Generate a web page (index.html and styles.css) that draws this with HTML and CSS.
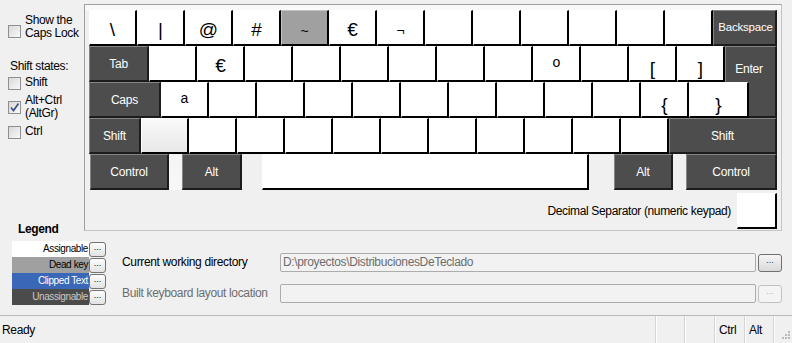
FILE: index.html
```html
<!DOCTYPE html>
<html>
<head>
<meta charset="utf-8">
<link rel="stylesheet" href="styles.css">
</head>
<body>
<div class="app">
  <div class="top">
    <div class="sidebar">
      <div class="chk caps"><span class="box"></span><span class="lbl">Show the<br>Caps Lock</span></div>
      <div class="shift-title">Shift states:</div>
      <div class="chk c-shift"><span class="box"></span><span class="lbl">Shift</span></div>
      <div class="chk c-alt"><span class="box"><svg width="11" height="11" viewBox="0 0 11 11"><path d="M2 5.5 L4.5 8.5 L9.5 1.5" fill="none" stroke="#3d4f86" stroke-width="1.7"/></svg></span><span class="lbl">Alt+Ctrl<br>(AltGr)</span></div>
      <div class="chk c-ctrl"><span class="box"></span><span class="lbl">Ctrl</span></div>
      <div class="legend-title">Legend</div>
    </div>
    <div class="panel">
      <div class="kbd">
        <div class="row">
          <div class="key ch">\</div>
          <div class="key ch">|</div>
          <div class="key ch">@</div>
          <div class="key ch">#</div>
          <div class="key dead ch sm">~</div>
          <div class="key ch">€</div>
          <div class="key ch sm">¬</div>
          <div class="key"></div>
          <div class="key"></div>
          <div class="key"></div>
          <div class="key"></div>
          <div class="key"></div>
          <div class="key"></div>
          <div class="key fn w-bksp">Backspace</div>
        </div>
        <div class="row">
          <div class="key fn w-tab">Tab</div>
          <div class="key"></div>
          <div class="key ch">€</div>
          <div class="key"></div>
          <div class="key"></div>
          <div class="key"></div>
          <div class="key"></div>
          <div class="key"></div>
          <div class="key"></div>
          <div class="key lt">o</div>
          <div class="key"></div>
          <div class="key ch low">[</div>
          <div class="key ch low">]</div>
          <div class="key fn enter">Enter</div>
        </div>
        <div class="row">
          <div class="key fn w-caps">Caps</div>
          <div class="key lt">a</div>
          <div class="key"></div>
          <div class="key"></div>
          <div class="key"></div>
          <div class="key"></div>
          <div class="key"></div>
          <div class="key"></div>
          <div class="key"></div>
          <div class="key"></div>
          <div class="key"></div>
          <div class="key ch low">{</div>
          <div class="key ch low w-brace">}</div>
          <div class="key fn enter-tail"></div>
        </div>
        <div class="row">
          <div class="key fn w-lshift">Shift</div>
          <div class="key ghost"></div>
          <div class="key"></div>
          <div class="key"></div>
          <div class="key"></div>
          <div class="key"></div>
          <div class="key"></div>
          <div class="key"></div>
          <div class="key"></div>
          <div class="key"></div>
          <div class="key"></div>
          <div class="key"></div>
          <div class="key fn w-rshift">Shift</div>
        </div>
        <div class="row row-bottom">
          <div class="key fn w-lctrl">Control</div>
          <div class="gap g13 faint"></div>
          <div class="key fn w-lalt">Alt</div>
          <div class="gap g20"></div>
          <div class="key space"></div>
          <div class="gap g25"></div>
          <div class="key fn w-ralt">Alt</div>
          <div class="gap g13"></div>
          <div class="key fn w-rctrl">Control</div>
        </div>
      </div>
      <div class="decimal">
        <span>Decimal Separator (numeric keypad)</span>
        <div class="key dec"></div>
      </div>
    </div>
  </div>
  <div class="bottom">
    <div class="legend">
      <div class="lg-row"><span class="lg-label assign">Assignable</span><span class="lg-btn">...</span></div>
      <div class="lg-row"><span class="lg-label deadk">Dead key</span><span class="lg-btn">...</span></div>
      <div class="lg-row"><span class="lg-label clip">Clipped Text</span><span class="lg-btn">...</span></div>
      <div class="lg-row"><span class="lg-label unassign">Unassignable</span><span class="lg-btn">...</span></div>
    </div>
    <div class="paths">
      <span class="p-label">Current working directory</span>
      <div class="p-input">D:\proyectos\DistribucionesDeTeclado</div>
      <div class="p-btn">...</div>
      <span class="p-label disabled">Built keyboard layout location</span>
      <div class="p-input"></div>
      <div class="p-btn disabled">...</div>
    </div>
  </div>
  <div class="status">
    <div class="st-main">Ready</div>
    <div class="pane w29"></div>
    <div class="pane w30"></div>
    <div class="pane w30">Ctrl</div>
    <div class="pane w29">Alt</div>
    <div class="pane grip"><svg width="12" height="12" viewBox="0 0 12 12"><g fill="#b8b8b8"><rect x="9" y="1" width="2" height="2"/><rect x="6" y="4" width="2" height="2"/><rect x="9" y="4" width="2" height="2"/><rect x="3" y="7" width="2" height="2"/><rect x="6" y="7" width="2" height="2"/><rect x="9" y="7" width="2" height="2"/></g></svg></div>
  </div>
</div>
</body>
</html>
```
FILE: styles.css
```css
* { box-sizing: border-box; margin: 0; padding: 0; }
html, body { width: 792px; height: 343px; overflow: hidden; }
body {
  background: #f0f0f0;
  font-family: "Liberation Sans", Arial, sans-serif;
  font-size: 12px;
  letter-spacing: -0.35px;
  color: #000;
}
.app { display: flex; flex-direction: column; height: 343px; }

/* top area */
.top { display: flex; height: 231px; padding-top: 4px; }
.sidebar {
  width: 84px;
  display: flex;
  flex-direction: column;
  padding: 10px 0 0 8px;
}
.chk { display: flex; align-items: flex-start; gap: 4px; line-height: 13px; }
.box {
  width: 13px; height: 13px; flex: none;
  border: 1px solid #8e8f8f;
  background: linear-gradient(135deg, #d8d8d8, #f9f9f9);
  display: flex; align-items: center; justify-content: center;
}
.caps .box { margin-top: 11px; }
.shift-title { margin-top: 20px; line-height: 13px; padding-left: 2px; }
.c-shift { margin-top: 3px; }
.c-shift .box { margin-top: 1px; }
.c-alt { margin-top: 4px; }
.c-alt .box { margin-top: 7px; }
.c-ctrl { margin-top: 5px; }
.c-ctrl .box { margin-top: 1px; }
.legend-title {
  margin-top: auto; margin-bottom: -5px; margin-left: 10px;
  font-weight: bold; line-height: 13px;
}

/* keyboard panel */
.panel {
  width: 698px; height: 227px;
  border: 1px solid #a0a0a0;
  border-right-color: #c4c4c4;
  border-bottom-color: #c4c4c4;
  padding: 5px 4px 0 4px;
  background: linear-gradient(#f9f9f9 0 5px, #f0f0f0 5px);
}
.row { display: flex; height: 36px; }
.key {
  width: 48px; height: 36px; flex: none;
  border-style: solid;
  border-width: 1px 2px 2px 1px;
  border-color: #fff #000 #000 #fff;
  background: #fff;
  display: flex; align-items: center; justify-content: center;
  line-height: 1;
  letter-spacing: 0;
}
.ch { font-size: 19px; padding-top: 4px; }
.sm { font-size: 14px; padding-top: 6px; }
.low { padding-top: 9px; }
.lt { font-size: 14px; padding-bottom: 3px; }
.dead { background: #a0a0a0; border-color: #c2c2c2 #000 #000 #c2c2c2; }
.fn {
  background: #4d4d4d;
  border-color: #858585 #1c1c1c #1c1c1c #858585;
  color: #fff;
  font-size: 12px;
  letter-spacing: -0.2px;
}
.ghost {
  background: linear-gradient(#f9f9f9, #e8e8e8);
  border-color: #fff #000 #000 #fff;
}
.w-bksp { width: 64px; font-size: 11.5px; padding-left: 2px; }
.w-tab { width: 60px; }
.enter { width: 52px; border-bottom-width: 0; align-items: flex-start; padding-top: 16px; padding-right: 3px; }
.w-caps { width: 72px; }
.w-brace { width: 60px; }
.enter-tail { width: 28px; border-top-width: 0; border-left-width: 0; }
.w-lshift { width: 52px; }
.w-rshift { width: 108px; }
.row-bottom { padding-left: 1px; }
.w-lctrl { width: 79px; }
.w-lalt { width: 60px; }
.space { width: 327px; }
.w-ralt { width: 59px; }
.w-rctrl { width: 91px; }
.gap { flex: none; height: 36px; }
.g13 { width: 13px; }
.g20 { width: 20px; }
.g25 { width: 25px; }
.faint { background: linear-gradient(#f4f4f4, #f8f8f8); }

.decimal {
  display: flex; justify-content: flex-end; align-items: center;
  gap: 6px; margin-top: 3px; height: 36px;
  white-space: nowrap;
}
.dec { width: 40px; }

/* bottom area */
.bottom { display: flex; height: 84px; }
.legend { margin: 10px 0 0 12px; display: flex; flex-direction: column; }
.lg-row { display: flex; height: 16px; }
.lg-label {
  width: 77px; font-size: 10px; line-height: 16px;
  text-align: right; padding-right: 1px; letter-spacing: -0.4px;
  white-space: nowrap;
}
.assign { background: #fff; color: #000; }
.deadk { background: #a0a0a0; color: #000; }
.clip { background: #3a67b7; color: #fff; }
.unassign { background: #4b4b4b; color: #c9c9c9; }
.lg-btn {
  width: 17px; height: 15px; margin-top: 0.5px;
  border: 1px solid #737373; border-radius: 3px;
  background: linear-gradient(#fdfdfd, #e2e2e2);
  font-size: 9px; line-height: 9px; text-align: center; letter-spacing: 0;
}

.paths {
  margin: 22px 0 0 16px;
  display: grid;
  grid-template-columns: 156px 476px 24px;
  column-gap: 2px; row-gap: 12px;
  grid-auto-rows: 19px;
  align-items: center;
  align-content: start;
}
.p-label { line-height: 19px; white-space: nowrap; }
.p-label.disabled { color: #6d6d6d; }
.p-input {
  height: 19px;
  border: 1px solid #acacac; border-radius: 2px;
  background: #f2f2f2;
  color: #6d6d6d;
  line-height: 17px; padding-left: 2px;
  white-space: nowrap; overflow: hidden;
}
.p-btn {
  height: 18px;
  border: 1px solid #707070; border-radius: 3px;
  background: linear-gradient(#f5f5f5, #dadada);
  font-size: 9px; line-height: 10px; text-align: center; letter-spacing: 0;
  color: #333;
}
.p-btn.disabled { border-color: #c2c2c2; background: #f4f4f4; color: #b0b0b0; }

/* status bar */
.status {
  height: 28px;
  border-top: 1px solid #b8b8b8;
  display: flex;
}
.st-main { flex: 1; display: flex; align-items: center; padding-left: 2px; }
.pane {
  flex: none;
  border-left: 1px solid #d4d4d4;
  box-shadow: inset 1px 0 #fff;
  display: flex; align-items: center; padding-left: 4px;
}
.w29 { width: 29px; }
.w30 { width: 30px; }
.grip { width: 19px; align-items: flex-end; justify-content: flex-end; padding: 0 1px 1px 0; }
```
